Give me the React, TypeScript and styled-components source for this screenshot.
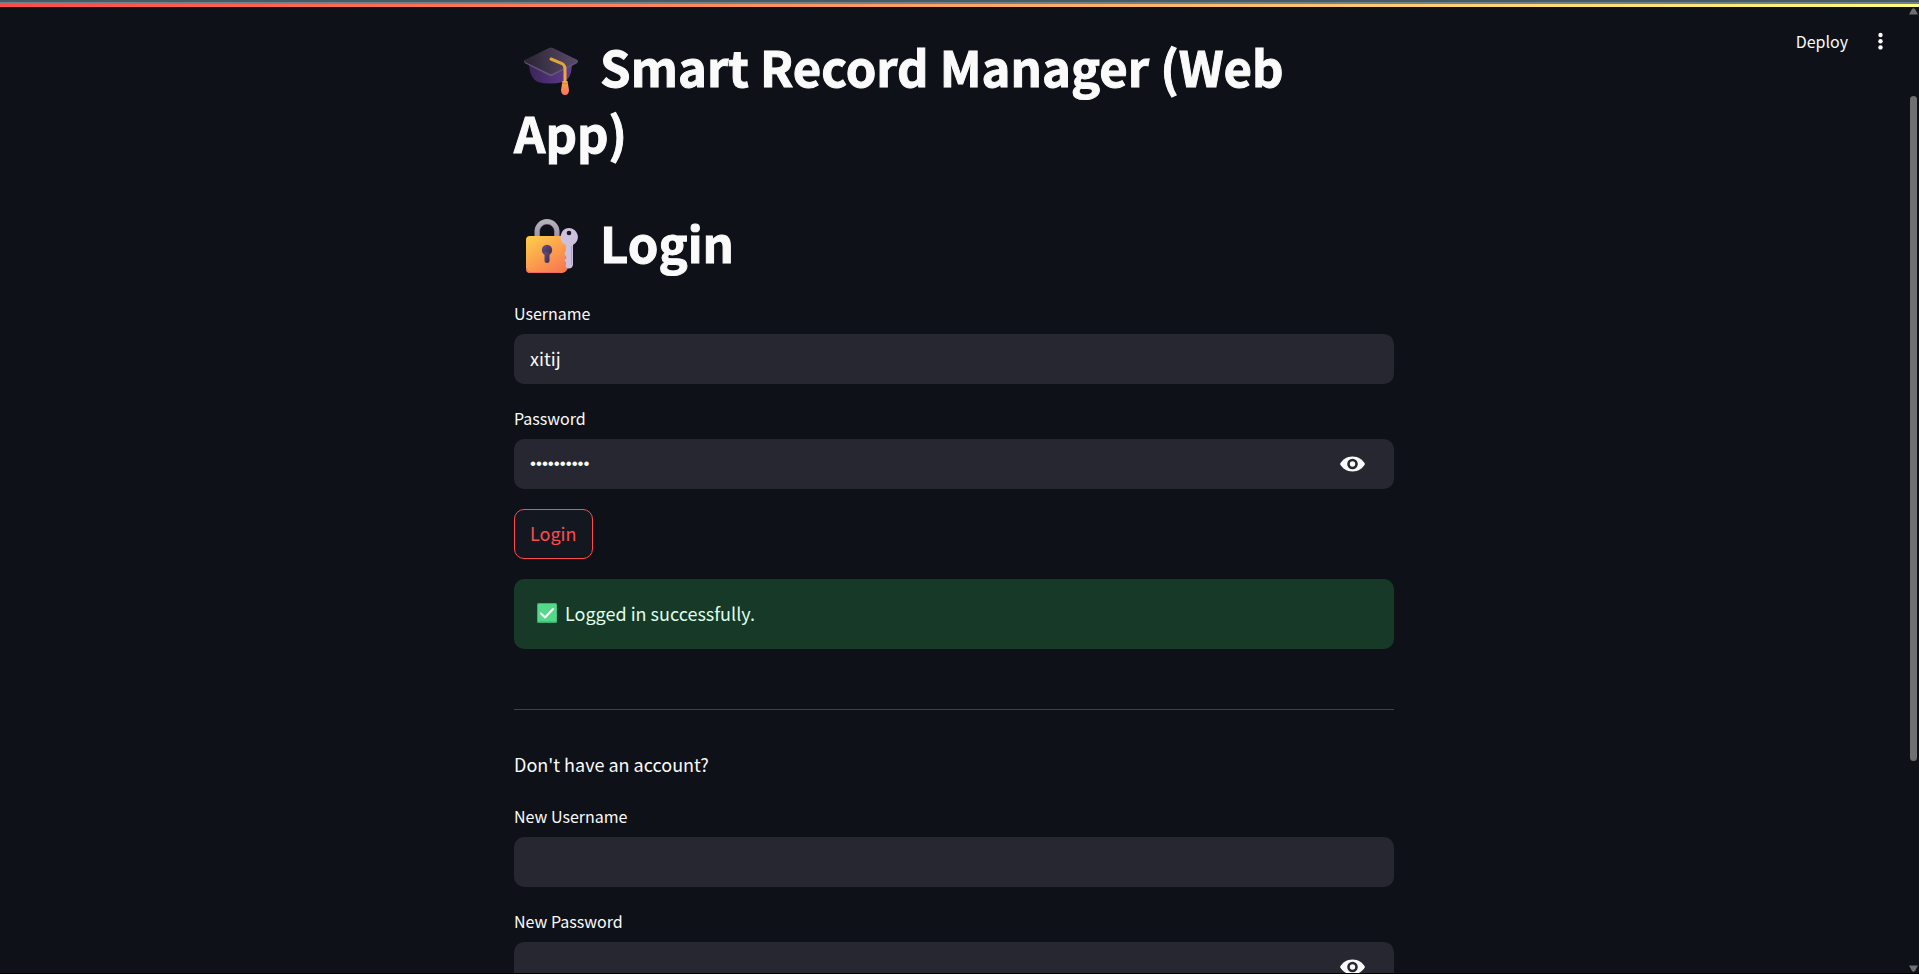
import React, { useState } from "react";
import styled, { createGlobalStyle } from "styled-components";

const GlobalStyle = createGlobalStyle`
  *, *::before, *::after { box-sizing: border-box; }
  body {
    margin: 0;
    background: #0e1117;
    color: #fafafa;
    font-family: "Noto Sans CJK SC", "Noto Sans", sans-serif;
    font-size: 18px;
    line-height: 28px;
  }
`;

const Page = styled.div`
  display: flex;
  flex-direction: column;
  height: 100vh;
  overflow: hidden;
  border-bottom: 1px solid #000;
`;

const BrowserEdge = styled.div`
  flex: none;
  height: 4px;
  background: linear-gradient(#455a64 50%, #71828b 50%);
`;

const Decoration = styled.div`
  flex: none;
  height: 3px;
  background: linear-gradient(90deg, #ff4b4b, #fffd80);
`;

const Viewport = styled.div`
  flex: 1;
  min-height: 0;
  display: flex;
  overflow: hidden;
`;

const Stage = styled.div`
  flex: 1;
  min-width: 0;
  display: grid;
  grid-template-columns: minmax(0, 1fr) minmax(0, 880px) minmax(0, 1fr);
`;

const Content = styled.main`
  grid-column: 2;
  min-width: 0;
  padding-top: 26px;
`;

const Toolbar = styled.header`
  grid-column: 3;
  display: flex;
  justify-content: flex-end;
  align-items: center;
  gap: 22px;
  height: 68px;
  padding: 0 18px 0 0;
`;

const ToolbarButton = styled.button`
  display: flex;
  align-items: center;
  padding: 0;
  border: 0;
  background: none;
  color: #fafafa;
  font: inherit;
  font-size: 16px;
  line-height: 24px;
  cursor: pointer;
`;

const Title = styled.h1`
  margin: 0 0 44px;
  font-size: 49px;
  font-weight: 700;
  line-height: 66px;
  -webkit-text-stroke: 1px #fafafa;
`;

const Subtitle = styled(Title)`
  margin-bottom: 24px;
`;

const HeadingEmoji = styled.svg`
  width: 56px;
  height: 56px;
  margin: 0 10px 0 9px;
  vertical-align: -11px;
`;

const Field = styled.div`
  display: flex;
  flex-direction: column;
  margin-bottom: 20px;
`;

const Label = styled.label`
  margin-bottom: 7px;
  font-size: 16px;
  line-height: 28px;
`;

const InputBox = styled.div`
  display: flex;
  align-items: center;
  height: 50px;
  padding: 0 16px;
  border-radius: 10px;
  background: #262730;
`;

const Input = styled.input`
  flex: 1;
  min-width: 0;
  height: 30px;
  padding: 0 0 2px;
  border: 0;
  outline: 0;
  background: none;
  color: #fafafa;
  font: inherit;
  font-size: 18px;

  &[type="password"] {
    padding: 0;
    font-family: "Liberation Sans", sans-serif;
    font-size: 17px;
  }
`;

const RevealButton = styled.button`
  display: flex;
  margin-right: 12px;
  padding: 0;
  border: 0;
  background: none;
  color: #fafafa;
  cursor: pointer;
`;

const SubmitButton = styled.button`
  display: block;
  height: 50px;
  margin-bottom: 20px;
  padding: 0 15px 2px;
  border: 1px solid #ff4b4b;
  border-radius: 10px;
  background: #131720;
  color: #ff4b4b;
  font: inherit;
  cursor: pointer;
`;

const Alert = styled.div`
  display: flex;
  align-items: center;
  gap: 8px;
  height: 70px;
  padding: 0 23px 2px;
  border-radius: 10px;
  background: #173928;
  color: #dffde9;
`;

const Divider = styled.hr`
  height: 1px;
  margin: 60px 0 40px;
  border: 0;
  background: #404143;
`;

const Prompt = styled.p`
  margin: 0 0 24px;
`;

const Scrollbar = styled.div`
  flex: none;
  display: flex;
  flex-direction: column;
  align-items: center;
  width: 11px;
  padding: 1px 0;
`;

const Gap = styled.div<{ $share: number }>`
  flex: ${(p) => p.$share} 0 0;
`;

const Thumb = styled.div`
  flex: 665 0 0;
  width: 7px;
  border-radius: 4px;
  background: #6f7072;
`;

function CapEmoji() {
  return (
    <HeadingEmoji viewBox="0 0 56 56" aria-hidden="true">
      <defs>
        <linearGradient id="capBase" x1="0" x2="1">
          <stop offset="0" stopColor="#3b2558" />
          <stop offset="1" stopColor="#5f3c91" />
        </linearGradient>
        <linearGradient id="capTop" x1="0" x2="1">
          <stop offset="0.1" stopColor="#2e2737" />
          <stop offset="1" stopColor="#5b4c6b" />
        </linearGradient>
        <linearGradient id="capTassel" gradientUnits="userSpaceOnUse" x1="0" x2="0" y1="16" y2="53">
          <stop offset="0" stopColor="#d9a63a" />
          <stop offset="0.65" stopColor="#f9a63f" />
          <stop offset="1" stopColor="#ff6f65" />
        </linearGradient>
      </defs>
      <path d="M6 20H49C49 32 46 38 40 40Q27 43 15 40C9 37 6 31 6 20Z" fill="url(#capBase)" />
      <path d="M1 19.500Q1 20.500 2.500 21.500L26 33.500Q28 34.500 30 33.500L53.500 21.500Q55 20.500 55 19.500L54 18L28 31L2 18Z" fill="#655377" />
      <path d="M1.500 18L26 6Q28 5 30 6L54.500 18Q55.500 19 54 20L30 31.500Q28 32.500 26 31.500L2 20Q0.500 19 1.500 18Z" fill="url(#capTop)" />
      <path d="M28 17L39 21.500Q42 23 42 27V42" fill="none" stroke="url(#capTassel)" strokeWidth="3" strokeLinecap="round" />
      <path d="M39.500 39H44.500L46 48Q46 53 42 53T38 48Z" fill="url(#capTassel)" />
      <path d="M39.500 41.500H44.500" stroke="#ef7641" />
    </HeadingEmoji>
  );
}

function LockEmoji() {
  return (
    <HeadingEmoji viewBox="0 0 56 56" aria-hidden="true">
      <defs>
        <linearGradient id="lockBody" x1="0" x2="0.7" y1="0" y2="1">
          <stop offset="0" stopColor="#ffcf49" />
          <stop offset="1" stopColor="#f87b50" />
        </linearGradient>
        <linearGradient id="lockHole" x1="0" x2="1" y1="0" y2="1">
          <stop offset="0" stopColor="#64517d" />
          <stop offset="1" stopColor="#3b2857" />
        </linearGradient>
        <linearGradient id="shackle" x1="0" x2="0" y1="0" y2="1">
          <stop offset="0" stopColor="#b5b1b9" />
          <stop offset="1" stopColor="#9b90a7" />
        </linearGradient>
      </defs>
      <path d="M14 22V13.500a10 10 0 0 1 20 0V22" fill="none" stroke="url(#shackle)" strokeWidth="5" />
      <path d="M16.500 20V13.500a7.500 7.500 0 0 1 15 0V20" fill="none" stroke="#b78fc8" strokeOpacity="0.5" />
      <path d="M7 18H38L45 24V50Q43 55 38 55H7Q3 55 3 51V22Q3 18 7 18Z" fill="url(#lockBody)" />
      <path d="M3.500 50Q4 54.500 8 54.500H37" fill="none" stroke="#ef6a62" />
      <circle cx="24" cy="32" r="5.200" fill="url(#lockHole)" />
      <path d="M21.500 34H26.500V43Q26.500 45 24 45T21.500 43Z" fill="url(#lockHole)" />
      <path d="M42 27V47Q43 51 45 50V27Z" fill="#bd7351" fillOpacity="0.5" />
      <path d="M46 10a9 9 0 0 1 4 17V47Q49 50.500 46 50.500T42.500 48L43 45L41.500 42L43.500 40L41.500 36L42.500 33V27A9 9 0 0 1 46 10Z" fill="#cdbfde" />
      <path d="M48.500 28V47" stroke="#b19fc4" strokeWidth="1" />
      <circle cx="46" cy="15" r="2.300" fill="#17151f" />
    </HeadingEmoji>
  );
}

function CheckEmoji() {
  return (
    <svg width="20" height="20" viewBox="0 0 20 20" aria-hidden="true">
      <rect width="20" height="20" rx="1.500" fill="#3fae72" />
      <rect x="1" y="1" width="18.500" height="17.500" rx="1" fill="#55d88a" />
      <path d="M4 10.500L8 14.500L16 6" fill="none" stroke="#fff" strokeWidth="2" strokeLinecap="round" strokeLinejoin="round" />
    </svg>
  );
}

function EyeIcon() {
  return (
    <svg width="26" height="16" viewBox="0 0 26 16" aria-hidden="true">
      <path d="M12.500 0.500C18.500 0.500 23 4 25 8C23 12 18.500 15.500 12.500 15.500S2 12 0 8C2 4 6.500 0.500 12.500 0.500Z" fill="currentColor" />
      <circle cx="12.500" cy="8" r="4" fill="none" stroke="#262730" strokeWidth="2.600" />
    </svg>
  );
}

function ArrowIcon({ down = false }: { down?: boolean }) {
  return (
    <svg width="9" height="7" viewBox="0 0 9 7" aria-hidden="true">
      <path d={down ? "M0 0.500H9L6 6Q4.500 7.500 3 6Z" : "M0 6.500H9L6 1Q4.500 -0.500 3 1Z"} fill="#6f7072" />
    </svg>
  );
}

interface TextFieldProps {
  id: string;
  label: string;
  initial?: string;
  secret?: boolean;
}

function TextField({ id, label, initial = "", secret = false }: TextFieldProps) {
  const [value, setValue] = useState(initial);
  const [visible, setVisible] = useState(false);
  return (
    <Field>
      <Label htmlFor={id}>{label}</Label>
      <InputBox>
        <Input
          id={id}
          type={secret && !visible ? "password" : "text"}
          value={value}
          autoComplete="off"
          onChange={(e) => setValue(e.target.value)}
        />
        {secret && (
          <RevealButton type="button" aria-label="Show password text" onClick={() => setVisible(!visible)}>
            <EyeIcon />
          </RevealButton>
        )}
      </InputBox>
    </Field>
  );
}

export default function App() {
  return (
    <Page>
      <GlobalStyle />
      <BrowserEdge />
      <Decoration />
      <Viewport>
        <Stage>
          <Content>
            <Title>
              <CapEmoji /> Smart Record Manager (Web App)
            </Title>
            <Subtitle as="h2">
              <LockEmoji /> Login
            </Subtitle>
            <TextField id="username" label="Username" initial="xitij" />
            <TextField id="password" label="Password" initial="smartlogin" secret />
            <SubmitButton type="button">Login</SubmitButton>
            <Alert role="alert">
              <CheckEmoji />
              <span>Logged in successfully.</span>
            </Alert>
            <Divider />
            <Prompt>Don't have an account?</Prompt>
            <TextField id="new-username" label="New Username" />
            <TextField id="new-password" label="New Password" secret />
          </Content>
          <Toolbar>
            <ToolbarButton type="button">Deploy</ToolbarButton>
            <ToolbarButton type="button" aria-label="Main menu">
              <svg width="20" height="20" viewBox="0 0 20 20" fill="currentColor" aria-hidden="true">
                <circle cx="10.500" cy="4" r="2.200" />
                <circle cx="10.500" cy="10.200" r="2.200" />
                <circle cx="10.500" cy="16.400" r="2.200" />
              </svg>
            </ToolbarButton>
          </Toolbar>
        </Stage>
        <Scrollbar aria-hidden="true">
          <ArrowIcon />
          <Gap $share={81} />
          <Thumb />
          <Gap $share={204} />
          <ArrowIcon down />
        </Scrollbar>
      </Viewport>
    </Page>
  );
}
